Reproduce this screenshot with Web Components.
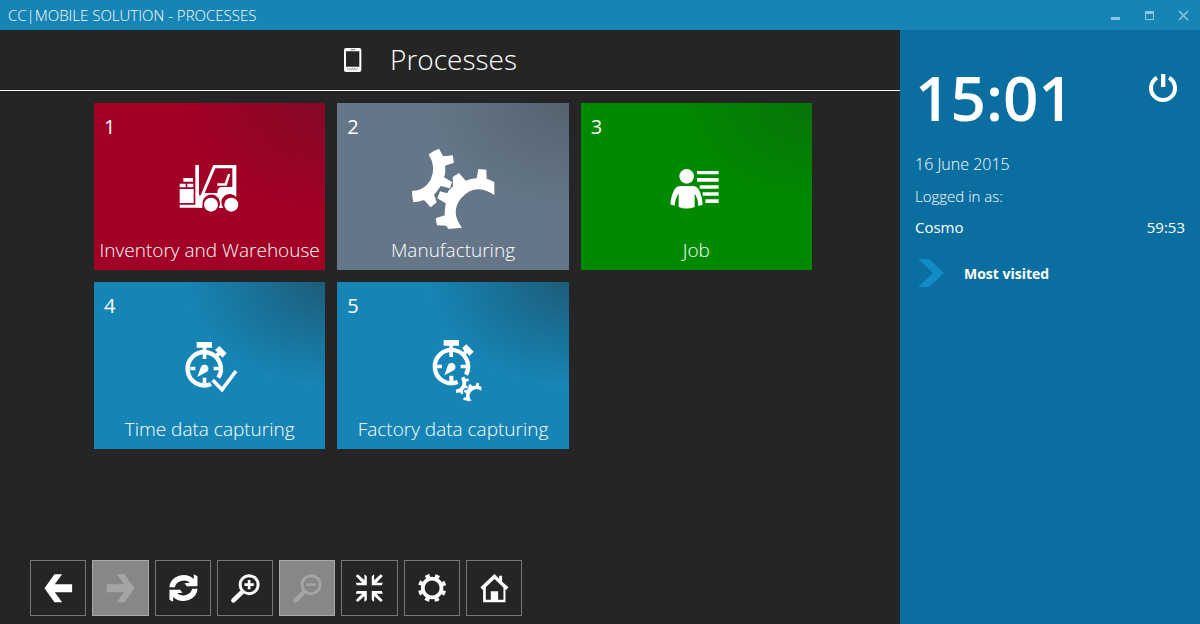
<!DOCTYPE html>
<html lang="en">
<head>
<meta charset="utf-8">
<title>CC|Mobile Solution - Processes</title>
<style>
  html, body { height: 100%; margin: 0; background: #252525; }
</style>
</head>
<body>
<mobile-app></mobile-app>

<template id="title-bar">
  <style>
    :host { display: flex; align-items: center; justify-content: space-between; height: 30px; background: #1685b6; }
    h1 { margin: 0; padding-left: 8px; font-size: 15px; font-weight: 300; line-height: 30px; white-space: nowrap; }
    .controls { display: flex; }
    button { display: grid; place-items: center; width: 34px; height: 30px; padding: 0; border: 0; background: none; color: #8ec5de; }
    svg { width: 11px; height: 11px; }
  </style>
  <h1><slot></slot></h1>
  <div class="controls">
    <button aria-label="Minimize"><svg viewBox="0 0 11 11"><path d="M1 7h9v3H1z" fill="currentColor"/></svg></button>
    <button aria-label="Maximize"><svg viewBox="0 0 11 11"><path fill-rule="evenodd" d="M1 1h9v9H1zM2 4v5h7V4z" fill="currentColor"/></svg></button>
    <button aria-label="Close"><svg viewBox="0 0 11 11"><path d="M1 1l9 9M10 1l-9 9" stroke="currentColor" stroke-width="1.5"/></svg></button>
  </div>
</template>

<template id="page-header">
  <style>
    :host { display: flex; align-items: center; justify-content: center; gap: 28px; height: 60px; padding-right: 39px; border-bottom: 1px solid #fff; }
    h2 { margin: 0; font-size: 28px; font-weight: 300; line-height: 40px; padding-bottom: 2px; }
    ::slotted(svg) { width: 18px; height: 26px; }
  </style>
  <slot name="icon"></slot>
  <h2><slot></slot></h2>
</template>

<template id="process-tile">
  <style>
    :host { display: block; --shade: .24; }
    button {
      display: grid; grid-template-rows: 28px 95px 28px; justify-items: center;
      width: 100%; padding: 10px 4px 6px; border: 0; color: #fff; font: inherit;
      background: radial-gradient(ellipse 61% 63% at 100% 0, rgba(37,37,37,var(--shade)), rgba(37,37,37,0)) var(--tile);
    }
    .number { justify-self: start; padding-left: 6px; font-size: 20px; font-weight: 400; line-height: 28px; }
    .label { font-size: 19px; font-weight: 300; line-height: 28px; white-space: nowrap; }
    ::slotted(svg) { width: 96px; height: 95px; fill: #fff; }
  </style>
  <button>
    <span class="number"></span>
    <slot name="icon"></slot>
    <span class="label"><slot></slot></span>
  </button>
</template>

<template id="tool-button">
  <style>
    :host { display: block; }
    button { display: block; box-sizing: border-box; width: 100%; height: 56px; padding: 0; border: 1px solid #777; background: none; color: #fff; }
    button:disabled { border-color: #a9a9a9; background: #878787; color: #a5a5a5; }
    ::slotted(svg) { display: block; width: 100%; height: 54px; }
  </style>
  <button><slot></slot></button>
</template>

<template id="side-panel">
  <style>
    :host { display: block; padding: 33px 15px 0; background: #0a6fa0; }
    .clock { display: flex; justify-content: space-between; align-items: flex-start; }
    time { display: block; }
    .clock time { font-size: 62px; font-weight: 600; line-height: 68px; }
    .power { margin: 10px 7px 0 0; padding: 0; border: 0; background: none; color: #fff; }
    .power svg { display: block; width: 30px; height: 30px; }
    .date { margin: 17px 0 1px; font-size: 16px; font-weight: 300; line-height: 32px; }
    p { display: flex; justify-content: space-between; margin: 0; font-size: 15px; line-height: 31px; font-weight: 400; }
    p.light { font-weight: 300; }
    .visited { display: flex; align-items: center; gap: 20px; height: 28px; margin-top: 16px; padding: 0 0 0 3px; border: 0; background: none; color: #fff; font: inherit; font-size: 14px; font-weight: 700; }
    .visited svg { width: 26px; height: 28px; }
  </style>
  <div class="clock">
    <time>15:01</time>
    <button class="power" aria-label="Log out">
      <svg viewBox="773 219 90 90"><path d="M800 233a36 36 0 1 0 36 0" fill="none" stroke="currentColor" stroke-width="12"/><path d="M812 222h13v39h-13z" fill="currentColor"/></svg>
    </button>
  </div>
  <time class="date">16 June 2015</time>
  <p class="light">Logged in as:</p>
  <p><span>Cosmo</span><span>59:53</span></p>
  <button class="visited"><svg viewBox="0 0 26 28"><path d="M0 0h11l15 14-15 14H0l15-14z" fill="#128cc6"/></svg>Most visited</button>
</template>

<template id="mobile-app">
  <style>
    :host {
      display: grid; grid-template: auto 1fr / 1fr 300px; min-height: 100%;
      color: #fff; background: #252525; font-family: "Open Sans", "Noto Sans", sans-serif;
    }
    title-bar { grid-column: 1 / -1; }
    main { display: flex; flex-direction: column; }
    .tiles { display: grid; grid-template-columns: repeat(3, 1fr); gap: 12px; padding: 12px 88px 24px 94px; }
    nav { display: grid; grid-template-columns: repeat(8, 1fr); gap: 6px; max-width: 492px; margin: auto 30px 8px; width: calc(100% - 60px); }
    .red { --tile: #a20025; }
    .slate { --tile: #647687; }
    .green { --tile: #008a00; --shade: .22; }
    .blue { --tile: #1685b6; --shade: .42; }
  </style>
  <title-bar>CC|MOBILE SOLUTION - PROCESSES</title-bar>
  <main>
    <page-header>
      <svg slot="icon" viewBox="72 51 54 78"><path fill="#fff" fill-rule="evenodd" d="M78 54h40q6 0 6 6v60q0 6-6 6H78q-6 0-6-6V60q0-6 6-6zM78 64v46h40V64z"/><path d="M92 59h13" stroke="#252525" stroke-width="2"/><path d="M81 116h34M85 119h26" stroke="#555" stroke-width="2" stroke-dasharray="4 3"/></svg>
      Processes
    </page-header>
    <div class="tiles">
      <process-tile number="1" class="red">
        <svg slot="icon" viewBox="215 123 288 285">
          <path d="M279 234h29v11h-29zM268 251h18v11h-18zM291 251h18v11h-18zM268 267h42v42h-42zM315 195h11v128h-58v-9h47z"/>
          <path fill-rule="evenodd" d="M369 195h69v96a24 24 0 0 0-39 33h-14a25 25 0 0 0-45-28q-4 7-4 28h-10v-38h5zM375 205l-32 74h38q0-17 12-18h33v-56z"/>
          <path d="M381 250h22l10-28h6v4l-10 31h-28z"/>
          <circle cx="362" cy="314" r="21"/><circle cx="423" cy="314" r="21"/>
        </svg>
        Inventory and Warehouse
      </process-tile>
      <process-tile number="2" class="slate">
        <svg slot="icon" viewBox="210 123 288 285">
          <path d="M281 163q14-11 31-17l12 22q14 1 29-2l4 22-27 9q3 20-3 35l24 14-6 19-28-7q-10 16-20 26l8 23-18 15-20-22q-15 5-32 7-4-17-4-34 37-1 56-34 18-36-6-76z"/>
          <path d="M315 274l21 6q7-12 18-21l-1-28 19-12 20 23q16-6 33-7l5-28 24 2 1 27q12 4 23 10v39q-58-39-100 10-33 42 3 88l-40 4-8-10-27-1-4-21 27-9q0-18 3-36l-25-15z"/>
        </svg>
        Manufacturing
      </process-tile>
      <process-tile number="3" class="green">
        <svg slot="icon" viewBox="220 123 288 285">
          <circle cx="336" cy="229" r="22"/>
          <path d="M318 258h36q14 0 20 14 8 14 10 42l-13 4q-1-24-11-37v40q-24 9-48 0v-40q-10 12-12 36l-13-4q2-27 13-45 6-10 18-10z"/>
          <path d="M367 213h65v10h-65zM367 234h65v11h-65zM375 256h57v10h-57zM384 277h48v10h-48zM392 298h40v11h-40z"/>
        </svg>
        Job
      </process-tile>
      <process-tile number="4" class="blue">
        <svg slot="icon" viewBox="215 120 288 285">
          <path d="M319 186h46v17h-17v34h-11v-34h-18zM300 260h15v11h-15zM370 260h16v11h-16zM337 293h11v16h-11z"/>
          <path d="M374 210l13-12 22 22-13 13-7-8-8 8-8-8 8-8z"/>
          <path d="M384 293a50 50 0 1 0-22 19" fill="none" stroke="#fff" stroke-width="13"/>
          <path d="M321 291l11-31a12 12 0 1 1 15 17z"/>
          <path d="M365 298l30 30 42-56" fill="none" stroke="#1685b6" stroke-width="20"/>
          <path d="M367 300l28 29 42-56" fill="none" stroke="#fff" stroke-width="11"/>
        </svg>
        Time data capturing
      </process-tile>
      <process-tile number="5" class="blue">
        <svg slot="icon" viewBox="210 120 288 285">
          <path d="M326 180h46v17h-18v34h-11v-34h-17zM306 254h15v11h-15zM377 254h16v11h-16zM343 287h12v16h-12z"/>
          <path d="M381 205l13-12 22 22-13 13-7-8-8 8-8-8 8-8z"/>
          <path d="M393 284a50 50 0 1 0-25 22" fill="none" stroke="#fff" stroke-width="13"/>
          <path d="M328 286l11-31a12 12 0 1 1 15 17z"/>
          <g transform="translate(291 244) scale(.31)" stroke="#1685b6" stroke-width="14" paint-order="stroke">
            <path d="M281 163q14-11 31-17l12 22q14 1 29-2l4 22-27 9q3 20-3 35l24 14-6 19-28-7q-10 16-20 26l8 23-18 15-20-22q-15 5-32 7-4-17-4-34 37-1 56-34 18-36-6-76z"/>
            <path d="M315 274l21 6q7-12 18-21l-1-28 19-12 20 23q16-6 33-7l5-28 24 2 1 27q12 4 23 10v39q-58-39-100 10-33 42 3 88l-40 4-8-10-27-1-4-21 27-9q0-18 3-36l-25-15z"/>
          </g>
        </svg>
        Factory data capturing
      </process-tile>
    </div>
    <nav aria-label="Tools">
      <tool-button label="Back"><svg viewBox="33 32 162 162"><path fill="currentColor" d="M73 114l30-42h23l-22 30h52v24h-52l22 30h-23z"/></svg></tool-button>
      <tool-button label="Forward" disabled><svg viewBox="220 32 162 162"><path fill="currentColor" d="M344 114l-30-42h-23l22 30h-52v24h52l-22 30h23z"/></svg></tool-button>
      <tool-button label="Refresh"><svg viewBox="406 32 162 162"><g fill="currentColor"><path d="M446 111a42 36 0 0 1 73-25V72l11 6v30h-32l-7-9 17-2a28 25 0 0 0-46 14z"/><path d="M446 111a42 36 0 0 1 73-25V72l11 6v30h-32l-7-9 17-2a28 25 0 0 0-46 14z" transform="rotate(180 488 113)"/></g></svg></tool-button>
      <tool-button label="Zoom in"><svg viewBox="593 32 162 162"><g fill="none" stroke="currentColor"><circle cx="686" cy="103" r="27" stroke-width="9"/><path d="M663 127l-24 23" stroke-width="14" stroke-linecap="round"/><path d="M686 89v28M672 103h28" stroke-width="8"/></g></svg></tool-button>
      <tool-button label="Zoom out" disabled><svg viewBox="30 32 162 162"><g fill="none" stroke="currentColor"><circle cx="123" cy="103" r="27" stroke-width="9"/><path d="M100 127l-24 23" stroke-width="14" stroke-linecap="round"/><path d="M109 103h28" stroke-width="8"/></g></svg></tool-button>
      <tool-button label="Fit to window"><svg viewBox="217 32 162 162"><g fill="currentColor"><path d="M258 77l6-5 20 18V72l7 6v27h-30l-3-8h19z"/><path d="M258 77l6-5 20 18V72l7 6v27h-30l-3-8h19z" transform="matrix(-1 0 0 1 597 0)"/><path d="M258 77l6-5 20 18V72l7 6v27h-30l-3-8h19z" transform="matrix(1 0 0 -1 0 227)"/><path d="M258 77l6-5 20 18V72l7 6v27h-30l-3-8h19z" transform="rotate(180 298.500 113.500)"/></g></svg></tool-button>
      <tool-button label="Settings"><svg viewBox="404 32 162 162"><g fill="none" stroke="currentColor"><circle cx="485" cy="113" r="28" stroke-width="11"/><circle cx="485" cy="113" r="37" stroke-width="11" pathLength="160" stroke-dasharray="9 11" stroke-dashoffset="-5.500"/></g></svg></tool-button>
      <tool-button label="Home"><svg viewBox="590 32 162 162"><g fill="currentColor"><path d="M672 71l14 14v-9h9v18l19 17-7 8-35-33-35 33-7-8z"/><path fill-rule="evenodd" d="M638 112l8-7v43h15v-25h22v25h16v-43l6 7v44h-67z"/></g></svg></tool-button>
    </nav>
  </main>
  <side-panel></side-panel>
</template>

<script>
  class TemplateElement extends HTMLElement {
    constructor() {
      super();
      const template = document.getElementById(this.localName);
      this.attachShadow({ mode: "open" }).append(template.content.cloneNode(true));
    }
  }
  class TitleBar extends TemplateElement {}
  class PageHeader extends TemplateElement {}
  class SidePanel extends TemplateElement {}
  class MobileApp extends TemplateElement {}
  class ProcessTile extends TemplateElement {
    connectedCallback() {
      this.shadowRoot.querySelector(".number").textContent = this.getAttribute("number");
    }
  }
  class ToolButton extends TemplateElement {
    connectedCallback() {
      const button = this.shadowRoot.querySelector("button");
      button.setAttribute("aria-label", this.getAttribute("label"));
      button.disabled = this.hasAttribute("disabled");
    }
  }
  customElements.define("title-bar", TitleBar);
  customElements.define("page-header", PageHeader);
  customElements.define("process-tile", ProcessTile);
  customElements.define("tool-button", ToolButton);
  customElements.define("side-panel", SidePanel);
  customElements.define("mobile-app", MobileApp);
</script>
</body>
</html>
